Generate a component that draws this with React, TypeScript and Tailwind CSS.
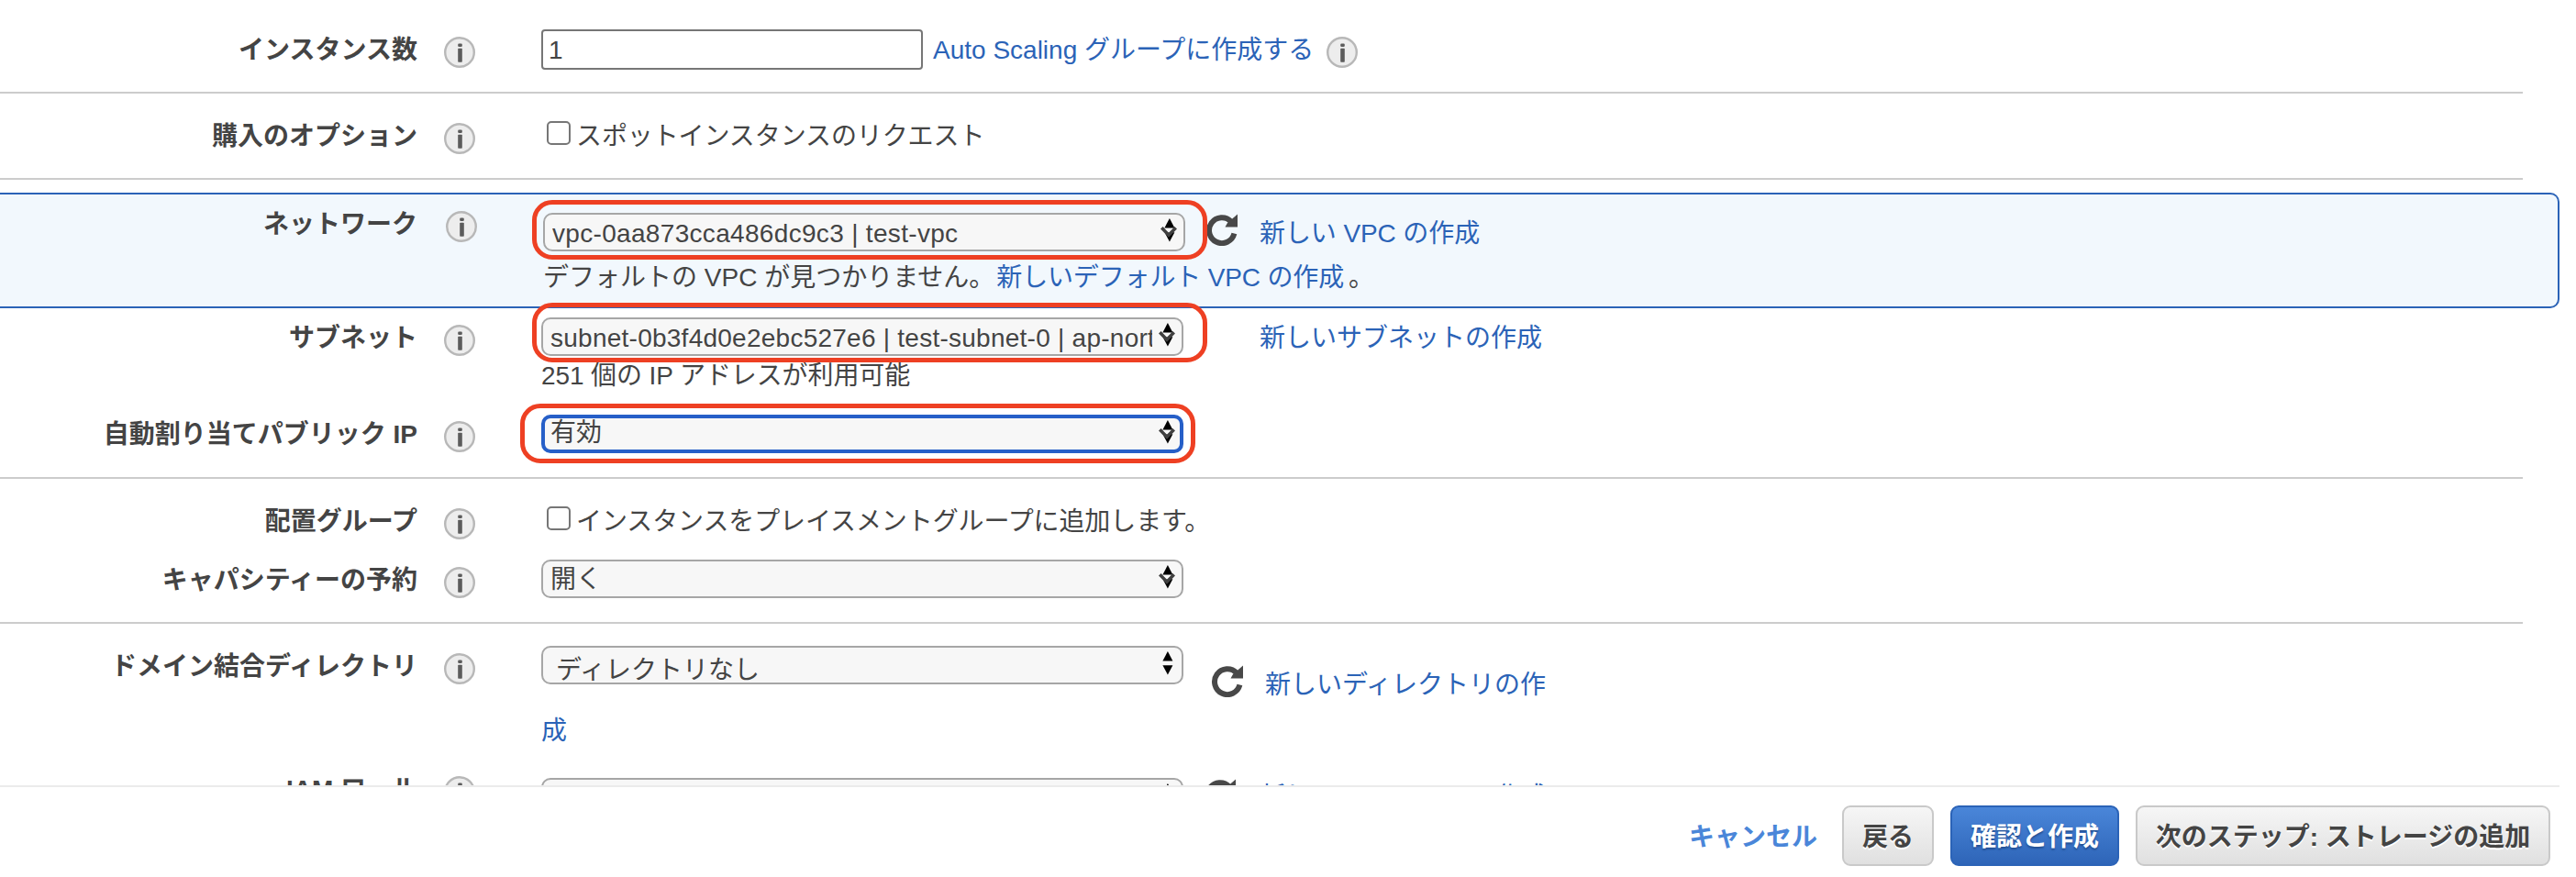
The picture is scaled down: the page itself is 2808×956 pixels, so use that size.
import type { ReactNode } from "react";

function Info() {
  return (
    <svg width="36" height="36" viewBox="0 0 36 36" className="block shrink-0">
      <circle cx="18" cy="18" r="15.8" fill="#ededed" stroke="#b8b8b8" strokeWidth="2.4" />
      <rect x="16.2" y="8.6" width="4.6" height="3.4" rx="1.2" fill="#5c5c5c" />
      <rect x="16.2" y="13.8" width="4.6" height="15" rx="0.8" fill="#5c5c5c" />
    </svg>
  );
}

function Refresh() {
  return (
    <svg width="36" height="36" viewBox="0 0 36 36" className="block shrink-0">
      <path d="M28 9.6A13.9 13.9 0 1 0 31.4 22.6" fill="none" stroke="#484848" strokeWidth="6" />
      <path d="M35 1.5V15.4H21.5L24 11Z" fill="#484848" />
    </svg>
  );
}

function Arrows({ plain }: { plain?: boolean }) {
  return (
    <svg width="20" height="28" viewBox="0 0 20 28" className="block shrink-0">
      <path d="M10.9 1L16.4 11.5H5.4Z" fill="#000" />
      <path d="M5.4 16.2H16.4L10.9 26.5Z" fill="#000" />
      {!plain && (
        <>
          <path d="M1 12.5L3.6 10L10 16.6L16.4 10L19 12.5L10 21.8Z" fill="#404040" />
          <path d="M5.6 12H14.4L10 16.5Z" fill="#f7f7f7" />
        </>
      )}
    </svg>
  );
}

function Select({ children, focus, plain, mark }: { children: ReactNode; focus?: boolean; plain?: boolean; mark?: string }) {
  return (
    <div className="relative h-[42px] w-[700px] shrink-0">
      <div
        className={
          focus
            ? "flex h-full w-full items-start rounded-[10px] border-4 border-[#265fc8] bg-[#f7f7f7] pl-[6px]"
            : "flex h-full w-full items-start rounded-[10px] border-2 border-[#a6a6a6] bg-[#f7f7f7] pl-[8px]"
        }
      >
        <div className={focus ? "-mt-[5px] h-[40px] w-[656px] overflow-hidden" : "h-[38px] w-[656px] overflow-hidden"}>{children}</div>
        <div className={focus ? "ml-[6px] mt-px" : "ml-[6px] mt-[3px]"}>
          <Arrows plain={plain} />
        </div>
      </div>
      {mark && <div className={mark} />}
    </div>
  );
}

function Row({ label, children, wide, className }: { label: string; children: ReactNode; wide?: boolean; className?: string }) {
  return (
    <div className={"flex items-start " + (className ?? "")}>
      <div className="mt-px w-[455px] shrink-0 text-right font-bold">{label}</div>
      <div className={wide ? "ml-[30px] mr-[71px] mt-[6px]" : "ml-[28px] mr-[71px] mt-[6px]"}>
        <Info />
      </div>
      <div>{children}</div>
    </div>
  );
}

function Check({ children }: { children: ReactNode }) {
  return (
    <div className="flex items-start">
      <div className="ml-[6px] mt-[5px] h-[26px] w-[26px] rounded-[5px] border-2 border-[#767676] bg-white" />
      <span className="ml-[6px] mt-px tracking-[-0.1px]">{children}</span>
    </div>
  );
}

const link = "text-[#2b63b7]";

export default function App() {
  return (
    <div className="h-[956px] w-[2808px] overflow-hidden bg-white font-['Liberation_Sans','Noto_Sans_CJK_JP',sans-serif] text-[28px] leading-[42px] whitespace-nowrap text-[#444]">
      <main className="h-[856px] overflow-hidden">
        <section className="h-[102px] w-[2750px] border-b-2 border-[#ccc] pt-[33px]">
          <Row label="インスタンス数">
            <div className="-mt-px flex items-start">
              <div className="h-[44px] w-[416px] rounded-[4px] border-2 border-[#767676] bg-white pl-[6px] leading-[41px]">1</div>
              <span className={"mt-[2px] ml-[11px] " + link}>Auto Scaling グループに作成する</span>
              <div className="mt-[7px] ml-[13px]">
                <Info />
              </div>
            </div>
          </Row>
        </section>
        <section className="h-[94px] w-[2750px] border-b-2 border-[#ccc] pt-[25px]">
          <Row label="購入のオプション">
            <Check>スポットインスタンスのリクエスト</Check>
          </Row>
        </section>
        <section className="mt-[14px] h-[126px] w-[2790px] rounded-r-[10px] border-2 border-l-0 border-[#2b63b7] bg-[#f2f8fd] pt-[11px]">
          <Row label="ネットワーク" wide>
            <div className="mt-[9px] flex items-start">
              <Select mark="absolute -top-[14px] -left-[12px] h-[65px] w-[736px] rounded-[22px] border-[5px] border-[#ee4023]">
                <span className="tracking-[0.32px]">vpc-0aa873cca486dc9c3 | test-vpc</span>
              </Select>
              <div className="ml-[22px]">
                <Refresh />
              </div>
              <span className={"mt-[2px] ml-[23px] tracking-[-0.1px] " + link}>新しい VPC の作成</span>
            </div>
            <div className="mt-[6px]">
              デフォルトの VPC が見つかりません。
              <span className={"ml-[2px] tracking-[-0.15px] " + link}>新しいデフォルト VPC の作成</span>
              <span className="ml-[5px]">。</span>
            </div>
          </Row>
        </section>
        <section className="h-[186px] w-[2750px] border-b-2 border-[#ccc] pt-[11px]">
          <Row label="サブネット" className="h-[84px]">
            <div className="-mt-px flex items-start">
              <Select mark="absolute -top-[16px] -left-[10px] h-[65px] w-[736px] rounded-[22px] border-[5px] border-[#ee4023]">
                <span className="tracking-[0.25px]">subnet-0b3f4d0e2ebc527e6 | test-subnet-0 | ap-northeast-1a</span>
              </Select>
              <span className={"mt-[2px] ml-[83px] " + link}>新しいサブネットの作成</span>
            </div>
            <div className="-mt-px tracking-[-0.1px]">251 個の IP アドレスが利用可能</div>
          </Row>
          <Row label="自動割り当てパブリック IP" className="mt-[21px]">
            <Select focus mark="absolute -top-[12px] -left-[23px] h-[65px] w-[736px] rounded-[22px] border-[5px] border-[#ee4023]">有効</Select>
          </Row>
        </section>
        <section className="h-[158px] w-[2750px] border-b-2 border-[#ccc] pt-[25px]">
          <Row label="配置グループ">
            <Check>インスタンスをプレイスメントグループに追加します。</Check>
          </Row>
          <Row label="キャパシティーの予約" className="mt-[21px]">
            <div className="-mt-px">
              <Select>
                <div className="-mt-px">開く</div>
              </Select>
            </div>
          </Row>
        </section>
        <section className="pt-[25px]">
          <Row label="ドメイン結合ディレクトリ" className="h-[134px]">
            <div className="-mt-px flex h-[72px] items-start">
              <Select plain>
                <div className="mt-[4px] pl-[6px]">ディレクトリなし</div>
              </Select>
              <div className="mt-[20px] ml-[30px]">
                <Refresh />
              </div>
              <span className={"mt-[22px] ml-[23px] " + link}>新しいディレクトリの作</span>
            </div>
            <div className={link}>成</div>
          </Row>
          <Row label="IAM ロール">
            <div className="mt-[9px] flex items-start">
              <Select>
                <div className="pl-[5px]">なし</div>
              </Select>
              <div className="ml-[22px]">
                <Refresh />
              </div>
              <span className={"ml-[25px] tracking-[-0.3px] " + link}>新しい IAM ロールの作成</span>
            </div>
          </Row>
        </section>
      </main>
      <footer className="flex h-[100px] w-[2790px] items-start justify-end border-t-2 border-[#ebebeb] pt-[20px] pr-[10px] font-bold">
        <span className="mt-[14px] mr-[27px] text-[#4a86d9]">キャンセル</span>
        <div className="mr-[18px] h-[66px] w-[100px] rounded-[9px] border-2 border-[#c9c9c9] bg-linear-to-b from-[#f6f6f6] to-[#e0e0e0] pt-[12px] text-center [text-shadow:0_2px_0_#fff]">戻る</div>
        <div className="mr-[18px] h-[66px] w-[184px] rounded-[9px] border-2 border-[#2b63b7] bg-linear-to-b from-[#4a86d9] to-[#2e65b8] pt-[12px] text-center text-white [text-shadow:0_2px_2px_#224f93]">確認と作成</div>
        <div className="h-[66px] w-[452px] rounded-[9px] border-2 border-[#c9c9c9] bg-linear-to-b from-[#f6f6f6] to-[#e0e0e0] pt-[12px] text-center [text-shadow:0_2px_0_#fff]">次のステップ: ストレージの追加</div>
      </footer>
    </div>
  );
}
